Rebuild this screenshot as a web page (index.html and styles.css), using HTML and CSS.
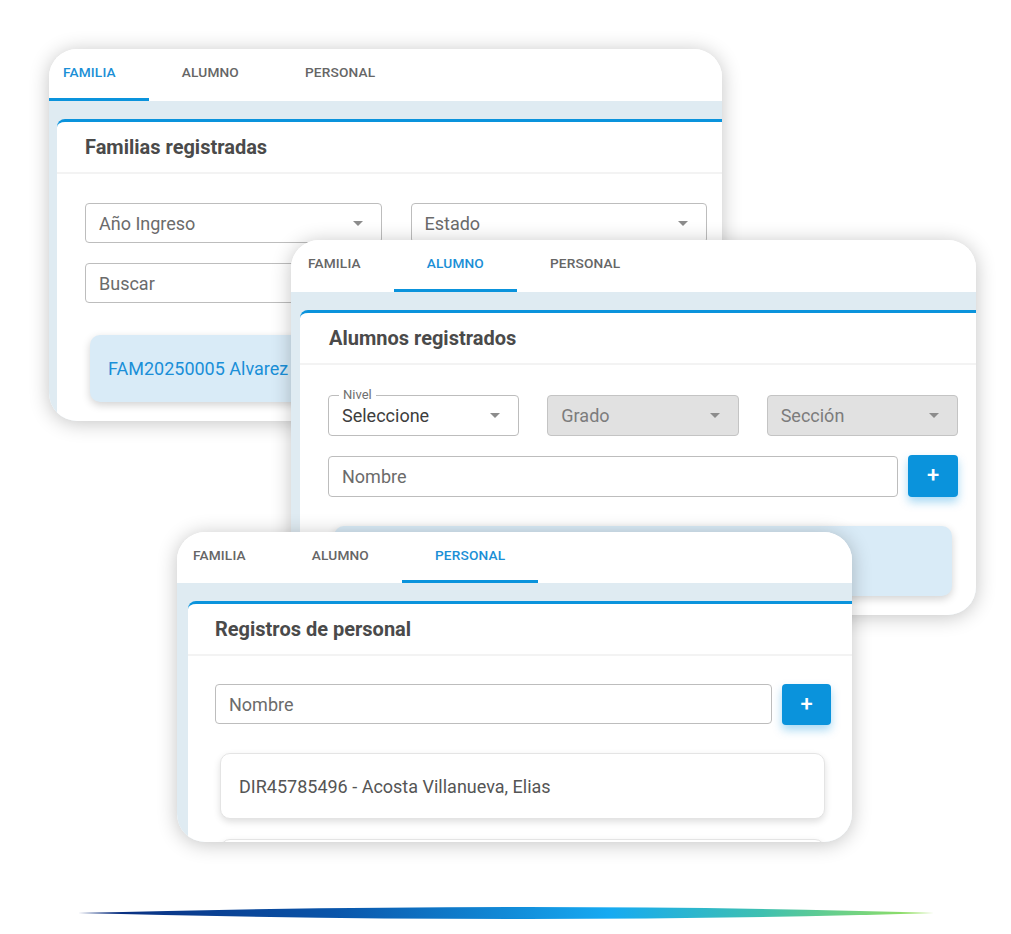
FILE: index.html
```html
<!DOCTYPE html>
<html lang="es">
<head>
<meta charset="utf-8">
<title>Registros</title>
<link rel="stylesheet" href="styles.css">
</head>
<body>
<div class="stage">

  <section class="win win-familia">
    <nav class="tabs">
      <span class="tab active">FAMILIA</span>
      <span class="tab">ALUMNO</span>
      <span class="tab">PERSONAL</span>
    </nav>
    <div class="win-body">
      <div class="panel">
        <h2 class="panel-title">Familias registradas</h2>
        <div class="panel-content">
          <div class="grid-2">
            <div class="field select"><span class="value">Año Ingreso</span><span class="caret"></span></div>
            <div class="field select"><span class="value">Estado</span><span class="caret"></span></div>
            <div class="field span-2"><span class="value">Buscar</span></div>
          </div>
          <div class="item item-blue">FAM20250005 Alvarez</div>
        </div>
      </div>
    </div>
  </section>

  <section class="win win-alumno">
    <nav class="tabs">
      <span class="tab">FAMILIA</span>
      <span class="tab active">ALUMNO</span>
      <span class="tab">PERSONAL</span>
    </nav>
    <div class="win-body">
      <div class="panel">
        <h2 class="panel-title">Alumnos registrados</h2>
        <div class="panel-content">
          <div class="grid-3">
            <div class="field select outlined"><span class="legend">Nivel</span><span class="value dark">Seleccione</span><span class="caret"></span></div>
            <div class="field select disabled"><span class="value">Grado</span><span class="caret"></span></div>
            <div class="field select disabled"><span class="value">Sección</span><span class="caret"></span></div>
          </div>
          <div class="search-row">
            <div class="field grow"><span class="value">Nombre</span></div>
            <button class="add-btn" type="button">+</button>
          </div>
          <div class="item item-blue tall"></div>
        </div>
      </div>
    </div>
  </section>

  <section class="win win-personal">
    <nav class="tabs">
      <span class="tab">FAMILIA</span>
      <span class="tab">ALUMNO</span>
      <span class="tab active">PERSONAL</span>
    </nav>
    <div class="win-body">
      <div class="panel">
        <h2 class="panel-title">Registros de personal</h2>
        <div class="panel-content">
          <div class="search-row">
            <div class="field grow"><span class="value">Nombre</span></div>
            <button class="add-btn" type="button">+</button>
          </div>
          <div class="item item-white">DIR45785496 - Acosta Villanueva, Elias</div>
          <div class="item item-white"></div>
        </div>
      </div>
    </div>
  </section>

  <svg class="swoosh" width="870" height="30" viewBox="0 0 870 30" aria-hidden="true">
    <defs>
      <linearGradient id="sw" x1="0" y1="0" x2="1" y2="0">
        <stop offset="0" stop-color="#0a2a7a"/>
        <stop offset="0.3" stop-color="#0a55aa"/>
        <stop offset="0.62" stop-color="#16aaf2"/>
        <stop offset="0.8" stop-color="#3fc0b0"/>
        <stop offset="1" stop-color="#9ee35a"/>
      </linearGradient>
    </defs>
    <path d="M2,15 Q 470,3 858,15 Q 470,27 2,15 Z" fill="url(#sw)"/>
  </svg>
</div>
</body>
</html>
```
FILE: styles.css
```css
* { box-sizing: border-box; }

html, body {
  margin: 0;
  padding: 0;
  background: #ffffff;
}

body {
  font-family: Roboto, "Liberation Sans", Arial, sans-serif;
  color: #555;
}

.stage {
  position: relative;
  width: 1011px;
  height: 934px;
  overflow: hidden;
}

/* windows on the canvas */
.win {
  position: absolute;
  display: flex;
  flex-direction: column;
  background: #ffffff;
  border-radius: 28px;
  overflow: hidden;
  box-shadow: 0 2px 20px rgba(0, 0, 0, 0.24);
}

.win-familia { left: 49px; top: 49px; width: 673px; height: 372px; z-index: 1; }
.win-alumno  { left: 291px; top: 240px; width: 685px; height: 375px; z-index: 2; }
.win-personal{ left: 177px; top: 532px; width: 675px; height: 310px; z-index: 3; }

/* tabs */
.tabs {
  display: flex;
  flex: 0 0 auto;
  height: 52px;
  background: #fff;
}
.win-familia .tabs { margin-left: -19px; }
.win-alumno .tabs { margin-left: -16px; }
.win-personal .tabs { margin-left: -17px; height: 51px; }

.tab {
  position: relative;
  display: flex;
  align-items: center;
  padding: 0 33px 6px;
  font-size: 13.7px;
  font-weight: 500;
  color: #666666;
  letter-spacing: 0.15px;
}
.tab.active { color: #1b8fd6; }
.tab.active::after {
  content: "";
  position: absolute;
  left: 0;
  right: 0;
  bottom: 0;
  height: 3px;
  background: #0a93dc;
}

/* body band */
.win-body {
  flex: 1 1 auto;
  background: #dfebf2;
  padding-top: 18px;
  display: flex;
}
.win-familia .win-body { padding-left: 8px; }
.win-alumno .win-body { padding-left: 9px; }
.win-personal .win-body { padding-left: 11px; }

.panel {
  flex: 1 1 auto;
  background: #fff;
  border-top: 3px solid #0a93dc;
  border-top-left-radius: 8px;
  display: flex;
  flex-direction: column;
}

.panel-title {
  margin: 0;
  height: 52px;
  display: flex;
  align-items: center;
  font-size: 20px;
  font-weight: 700;
  color: #4a4a4a;
  border-bottom: 2px solid #f3f3f3;
}
.win-familia .panel-title { padding-left: 28px; }
.win-alumno .panel-title { padding-left: 29px; }
.win-personal .panel-title { padding-left: 27px; }

.win-familia .panel-content { padding: 29px 15px 0 28px; }
.win-alumno .panel-content { padding: 30px 18px 0 28px; }
.win-personal .panel-content { padding: 28px 21px 0 27px; }

/* fields */
.grid-2 {
  display: grid;
  grid-template-columns: 1fr 1fr;
  gap: 20px 29px;
}
.span-2 { grid-column: 1 / span 2; }

.grid-3 {
  display: grid;
  grid-template-columns: 1fr 1fr 1fr;
  gap: 28px;
}

.field {
  position: relative;
  display: flex;
  align-items: center;
  height: 40px;
  padding: 0 18px 0 13px;
  border: 1px solid #bdbdbd;
  border-radius: 4px;
  background: #fff;
  font-size: 18px;
  color: #6b6b6b;
}
.win-alumno .field { height: 41px; }

.field .value { flex: 1 1 auto; white-space: nowrap; }
.field .value.dark { color: #3d3d3d; }

.caret {
  width: 0;
  height: 0;
  border-left: 5px solid transparent;
  border-right: 5px solid transparent;
  border-top: 5px solid #8c8c8c;
}

.field.disabled {
  background: #e1e1e1;
  border-color: #c4c4c4;
  color: #7c7c7c;
}

.legend {
  position: absolute;
  left: 10px;
  top: -9px;
  padding: 0 4px;
  background: #fff;
  font-size: 13px;
  line-height: 16px;
  color: #6f6f6f;
}

.search-row {
  display: flex;
  gap: 10px;
  align-items: flex-start;
}
.win-alumno .search-row { margin-top: 20px; }
.grow { flex: 1 1 auto; }

.add-btn {
  flex: 0 0 50px;
  height: 42px;
  margin-top: -1px;
  border: 0;
  border-radius: 4px;
  background: #0a93dc;
  color: #fff;
  font-family: Roboto, "Liberation Sans", Arial, sans-serif;
  font-size: 22px;
  font-weight: 500;
  line-height: 1;
  padding: 0 0 2px;
  box-shadow: 0 5px 10px rgba(10, 147, 220, 0.35);
}
.win-personal .add-btn { flex-basis: 49px; height: 41px; margin-top: 0; }

/* list items */
.item {
  display: flex;
  align-items: center;
  border-radius: 10px;
  font-size: 18px;
}
.item-blue {
  background: #d9ebf7;
  color: #1a8fd8;
  box-shadow: 0 3px 8px rgba(0, 0, 0, 0.18);
}
.win-familia .item-blue {
  height: 67px;
  margin: 32px 5px 0 5px;
  padding-left: 18px;
}
.win-alumno .item-blue {
  height: 70px;
  margin: 29px 6px 0 6px;
}

.item-white {
  height: 66px;
  margin: 28px 6px 0 5px;
  padding-left: 18px;
  background: #fff;
  border: 1px solid #e4e4e4;
  color: #555;
  box-shadow: 0 3px 7px rgba(0, 0, 0, 0.13);
}
.item-white + .item-white { margin-top: 20px; }

/* decorative swoosh */
.swoosh {
  position: absolute;
  left: 76px;
  top: 898px;
}
```
